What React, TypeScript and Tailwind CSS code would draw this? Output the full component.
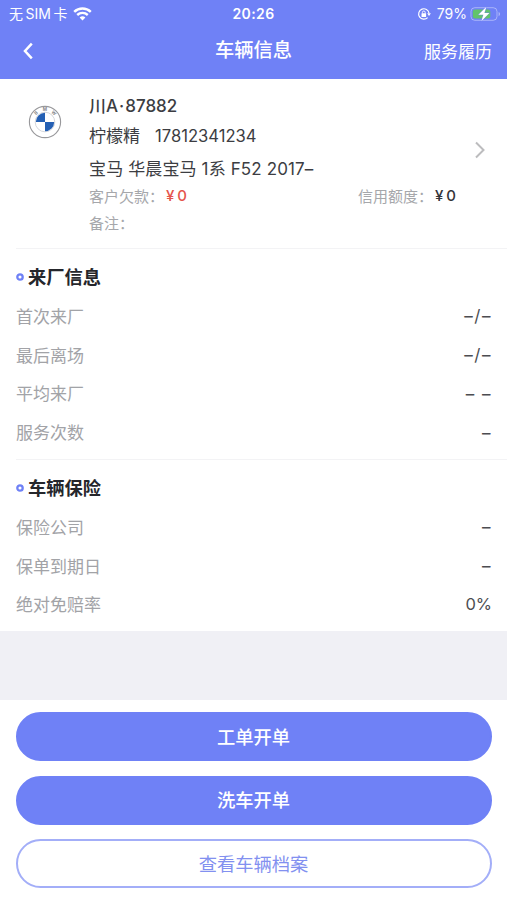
import type { ReactNode } from "react";

type Row = { label: string; value: string };

const visitRows: Row[] = [
  { label: "首次来厂", value: "–/–" },
  { label: "最后离场", value: "–/–" },
  { label: "平均来厂", value: "– –" },
  { label: "服务次数", value: "–" },
];

const insuranceRows: Row[] = [
  { label: "保险公司", value: "–" },
  { label: "保单到期日", value: "–" },
  { label: "绝对免赔率", value: "0%" },
];

function WifiIcon() {
  return (
    <svg width="19" height="14" viewBox="0 0 19 14" fill="none" stroke="white">
      <path d="M1.2 4.8C5.9.4 13.1.4 17.8 4.8" strokeWidth="2.5" />
      <path d="M4.2 8C7.2 5.2 11.8 5.2 14.8 8" strokeWidth="2.4" />
      <path d="M9.5 13.6 6.6 10.6a4.2 4.2 0 0 1 5.8 0Z" fill="white" stroke="none" />
    </svg>
  );
}

function RotationLockIcon() {
  return (
    <svg width="14" height="14" viewBox="0 0 14 14" fill="none" stroke="white">
      <path d="M10.6 10.6A5.2 5.2 0 1 1 12 6.2" strokeWidth="1.2" />
      <path d="M10.2 6.2h3.7L12 9Z" fill="white" stroke="none" />
      <rect x="4.5" y="6.3" width="4.6" height="3.6" rx="0.5" fill="white" stroke="none" />
      <path d="M5.4 6.5V5.4a1.4 1.4 0 0 1 2.8 0v1.1" strokeWidth="0.9" />
    </svg>
  );
}

function BatteryIcon() {
  return (
    <svg width="31" height="16" viewBox="0 0 31 16">
      <rect x="1" y="1.7" width="26" height="12.6" rx="3.8" fill="none" stroke="white" strokeOpacity="0.4" />
      <path d="M28.6 6v4.2c1.9-.7 1.9-3.5 0-4.2Z" fill="white" fillOpacity="0.45" />
      <rect x="2.8" y="3.5" width="17.5" height="9" rx="2.2" fill="#62c46b" />
      <path
        d="M16.4.8 8.4 8.8h5L11.3 15.2l8.1-8.3h-5Z"
        fill="white"
        stroke="#6f81f6"
        strokeWidth="0.7"
        paintOrder="stroke"
      />
    </svg>
  );
}

function BrandLogo() {
  return (
    <svg width="34" height="34" viewBox="0 0 34 34">
      <circle cx="17" cy="17" r="15.6" fill="white" stroke="#98989b" strokeWidth="1.1" />
      <circle cx="17" cy="17" r="9.8" fill="white" stroke="#c9ccd2" strokeWidth="0.8" />
      <path d="M17 17V7.8A9.2 9.2 0 0 0 7.8 17ZM17 17v9.2a9.2 9.2 0 0 0 9.2-9.2Z" fill="#2560b4" />
      <g fill="#88888b" fontFamily="Inter, sans-serif" fontSize="4.6" fontWeight="700" textAnchor="middle">
        <text transform="translate(8.2 8.2) rotate(-43)" y="1.4">B</text>
        <text transform="translate(17 4.6)" y="1.7">M</text>
        <text transform="translate(25.8 8.2) rotate(43)" y="1.4">W</text>
      </g>
    </svg>
  );
}

function Section({ title, rows }: { title: string; rows: Row[] }) {
  return (
    <section className="px-4 pt-[9px]">
      <h2 className="flex h-[38px] items-center gap-[4px] text-[18.3px] font-bold text-[#25262b]">
        <svg width="8" height="8" viewBox="0 0 8 8">
          <circle cx="4" cy="4" r="2.7" fill="none" stroke="#6f81f6" strokeWidth="2.3" />
        </svg>
        {title}
      </h2>
      {rows.map((row) => (
        <div key={row.label} className="flex h-[38.8px] items-center justify-between text-[17px]">
          <span className="pt-[3px] text-[#a2a3a7]">{row.label}</span>
          {row.value.includes("–") ? (
            <span className="-mr-[1px] pt-[2px] tracking-[1.5px] text-[#4c4d51]">{row.value}</span>
          ) : (
            <span className="-mr-px pt-px text-[16.5px] text-[#4c4d51]">{row.value}</span>
          )}
        </div>
      ))}
    </section>
  );
}

function PillButton({ children, outline = false }: { children: ReactNode; outline?: boolean }) {
  return (
    <button
      className={`h-[49px] w-full shrink-0 rounded-full border-2 text-[18.3px] ${
        outline
          ? "border-[#a3aef8] bg-white text-[#8290f0]"
          : "border-[#6f81f6] bg-[#6f81f6] font-medium text-white"
      }`}
    >
      {children}
    </button>
  );
}

export default function App() {
  return (
    <div
      lang="zh-CN"
      className="flex h-[900px] w-[507px] flex-col overflow-hidden bg-white font-['Inter','Noto_Sans_CJK_SC',sans-serif] leading-[24px] text-[#3c3d42]"
    >
      <header className="h-[79px] shrink-0 bg-[#6f81f6] text-white">
        <div className="grid h-[28px] grid-cols-3 items-center text-[14px]">
          <div className="flex items-center pl-[9px]">
            <span>无</span>
            <span className="mx-[2.5px]">SIM</span>
            <span>卡</span>
            <span className="ml-[6px] -mt-px">
              <WifiIcon />
            </span>
          </div>
          <span className="text-center font-semibold tracking-[0.4px]">20:26</span>
          <div className="flex items-center justify-end pr-[6px]">
            <RotationLockIcon />
            <span className="ml-[6px] mr-[3px]">79%</span>
            <BatteryIcon />
          </div>
        </div>
        <div className="grid h-[45px] grid-cols-3 items-center">
          <svg className="ml-[22px]" width="12" height="18" viewBox="0 0 12 18" fill="none">
            <path d="m9.8 1.7-6.8 7.3 6.8 7.3" stroke="white" strokeWidth="2.5" />
          </svg>
          <h1 className="pb-px text-center text-[19.3px] font-medium">车辆信息</h1>
          <span className="pr-[15px] pt-[3px] text-right text-[17px]">服务履历</span>
        </div>
      </header>

      <section className="flex h-[169px] shrink-0 pl-7">
        <div className="w-[61px] shrink-0 pt-[26px]">
          <BrandLogo />
        </div>
        <div className="flex-1 pt-[15px]">
          <p className="text-[17px] font-medium">
            川A<span className="mx-[1px]">·</span>87882
          </p>
          <p className="mt-[6px] flex gap-[15px] text-[17px]">
            <span>柠檬精</span>
            <span className="text-[16.6px]">17812341234</span>
          </p>
          <p className="mt-[9px] text-[17px] tracking-[0.13px]">宝马 华晨宝马 1系 F52 2017–</p>
          <div className="mt-[3px] flex text-[15px]">
            <p className="flex w-[269px]">
              <span className="font-['Noto_Sans_CJK_SC',sans-serif] text-[#a6a7ab]">客户欠款：</span>
              <span className="ml-[2px] font-medium text-[#e5554d] [word-spacing:-1px]">¥ 0</span>
            </p>
            <p className="flex">
              <span className="font-['Noto_Sans_CJK_SC',sans-serif] text-[#a6a7ab]">信用额度：</span>
              <span className="ml-[2px] font-medium text-[#34353a] [word-spacing:-1px]">¥ 0</span>
            </p>
          </div>
          <p className="mt-[3px] font-['Noto_Sans_CJK_SC',sans-serif] text-[15px] text-[#a6a7ab]">备注：</p>
        </div>
        <svg className="mr-[20px] mt-[61px] -ml-[40px]" width="14" height="20" viewBox="0 0 14 20" fill="none">
          <path d="m3 2.5 7.5 7.5L3 17.5" stroke="#bcbcbe" strokeWidth="2" />
        </svg>
      </section>

      <main>
        <div className="ml-4 h-px bg-[#f3f3f5]" />
        <div className="h-[210px]">
          <Section title="来厂信息" rows={visitRows} />
        </div>
        <div className="ml-4 h-px bg-[#f3f3f5]" />
        <div className="h-[171px]">
          <Section title="车辆保险" rows={insuranceRows} />
        </div>
      </main>

      <div className="h-[69px] shrink-0 bg-[#f0f0f5]" />

      <footer className="flex flex-1 flex-col gap-[14.5px] px-[15.5px] pt-[12px]">
        <PillButton>工单开单</PillButton>
        <PillButton>洗车开单</PillButton>
        <PillButton outline>查看车辆档案</PillButton>
      </footer>
    </div>
  );
}
